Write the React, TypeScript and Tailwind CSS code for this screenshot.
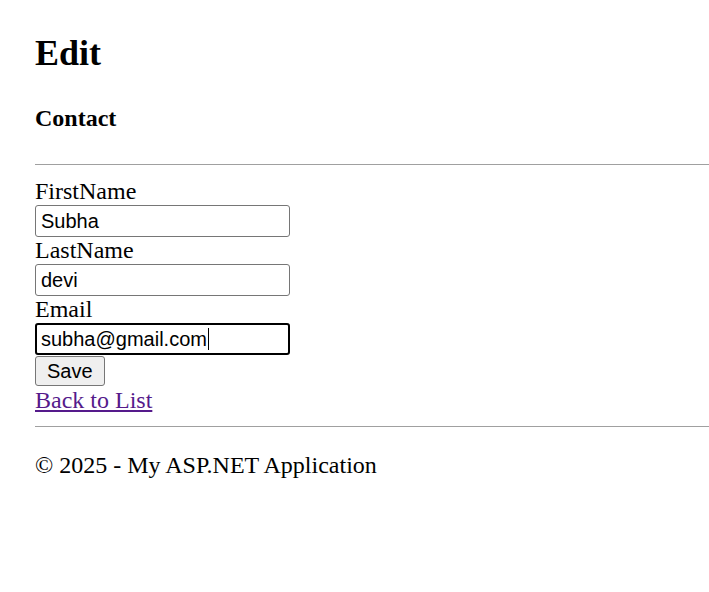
import React from "react";

const serif = "font-['Liberation_Serif','Times_New_Roman',serif]";
const sans = "font-['Liberation_Sans',Arial,sans-serif]";

function Field({ label, value }: { label: string; value: string }) {
  return (
    <div className="flex flex-col items-start">
      <label className="h-[27px] leading-[27px]">{label}</label>
      <input
        defaultValue={value}
        className={`${sans} h-[32px] w-[255px] rounded-[3px] border border-[#767676] bg-white px-[5px] text-[20px] leading-[23px] text-black outline-none`}
      />
    </div>
  );
}

export default function App() {
  return (
    <div className={`${serif} min-h-screen bg-white pl-[35px] pt-[33px] text-[24px] text-black`}>
      <h1 className="h-[41px] text-[36px] font-bold leading-[41px]">Edit</h1>
      <h4 className="mt-[31px] h-[27px] text-[24px] font-bold leading-[27px]">Contact</h4>

      <hr className="mt-[32px] border-0 border-t border-[#a0a0a0]" />

      <form className="mt-[13px] flex flex-col items-start">
        <Field label="FirstName" value="Subha" />
        <Field label="LastName" value="devi" />

        {/* Email is shown focused, with the caret after the text */}
        <div className="flex flex-col items-start">
          <label className="h-[27px] leading-[27px]">Email</label>
          <div
            role="textbox"
            className={`${sans} flex h-[32px] w-[255px] items-center rounded-[3px] border-2 border-black bg-white px-[4px] text-[20px] leading-[23px]`}
          >
            <span>subha@gmail.com</span>
            <span className="ml-px inline-block h-[22px] w-px bg-black" />
          </div>
        </div>

        <button
          type="button"
          className={`${sans} mt-px h-[30px] rounded-[3px] border border-[#767676] bg-[#efefef] px-[11px] text-[20px] leading-[23px] text-black`}
        >
          Save
        </button>
        <a href="#" className="mt-px h-[27px] leading-[27px] text-[#551a8b] underline">
          Back to List
        </a>
      </form>

      <hr className="mt-[12px] border-0 border-t border-[#a0a0a0]" />
      <footer className="mt-[25px] leading-[27px]">
        <p>© 2025 - My ASP.NET Application</p>
      </footer>
    </div>
  );
}
